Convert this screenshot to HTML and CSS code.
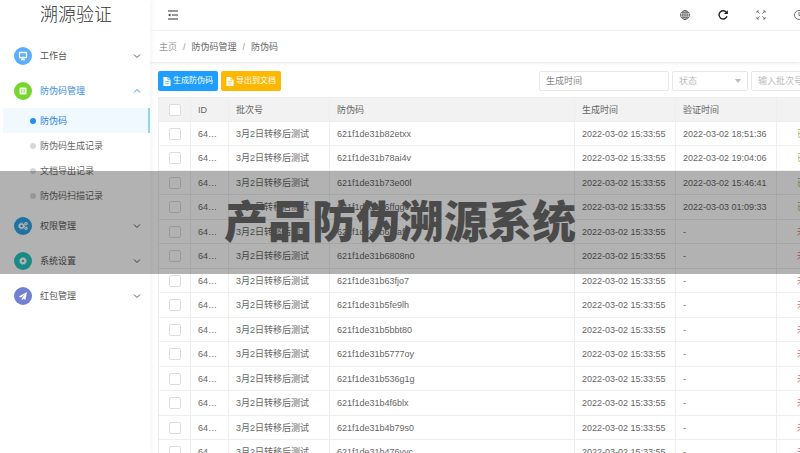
FILE: index.html
```html
<!DOCTYPE html>
<html lang="zh-CN">
<head>
<meta charset="utf-8">
<meta name="viewport" content="width=device-width, initial-scale=1">
<title>产品防伪溯源系统</title>
<link rel="stylesheet" href="styles.css">
</head>
<body>
<div class="app">
  <aside class="sidebar">
    <div class="brand">溯源验证</div>
    <nav class="menu">
      <a class="item" href="#"><span class="badge blue"><svg viewBox="0 0 18 18"><path d="M5.5 5.5h7v5h-7z" fill="none" stroke="#fff" stroke-width="1.3" stroke-linejoin="round"/><path d="M7 12.5h4M9 10.500v2" stroke="#fff" stroke-width="1.300"/></svg></span><span class="label">工作台</span><svg class="chevron" viewBox="0 0 8 8"><path d="M1 2.500l3 3 3-3"/></svg></a>
      <a class="item open" href="#"><span class="badge green"><svg viewBox="0 0 18 18"><rect x="5.500" y="5.500" width="7" height="7" rx="1" fill="#fff" fill-opacity=".9"/><path d="M7 8h1.500M9.500 8H11M7 10h1.500M9.500 10H11" stroke="#7ed321"/></svg></span><span class="label">防伪码管理</span><svg class="chevron" viewBox="0 0 8 8"><path d="M1 5.500l3-3 3 3"/></svg></a>
      <a class="sub active" href="#">防伪码</a>
      <a class="sub" href="#">防伪码生成记录</a>
      <a class="sub" href="#">文档导出记录</a>
      <a class="sub" href="#">防伪码扫描记录</a>
      <a class="item" href="#"><span class="badge azure"><svg viewBox="0 0 18 18" fill="none" stroke="#fff"><circle cx="7.500" cy="9" r="2" stroke-width="1.600"/><circle cx="7.500" cy="9" r="3" stroke-dasharray="1.200 1.160"/><circle cx="12" cy="6.800" r="1.200" stroke-width="1.200"/><circle cx="12" cy="11.200" r="1.200" stroke-width="1.200"/></svg></span><span class="label">权限管理</span><svg class="chevron" viewBox="0 0 8 8"><path d="M1 2.500l3 3 3-3"/></svg></a>
      <a class="item" href="#"><span class="badge teal"><svg viewBox="0 0 18 18" fill="none" stroke="#fff"><circle cx="9" cy="9" r="2.200" stroke-width="2"/><circle cx="9" cy="9" r="3.300" stroke-dasharray="1.400 1.190"/></svg></span><span class="label">系统设置</span><svg class="chevron" viewBox="0 0 8 8"><path d="M1 2.500l3 3 3-3"/></svg></a>
      <a class="item" href="#"><span class="badge violet"><svg viewBox="0 0 18 18"><path d="M13 5L4.800 9.500l2.200 1.100 4-3.600-3.200 4.200v2.300l1.400-1.700 2.300 1z" fill="#fff"/></svg></span><span class="label">红包管理</span><svg class="chevron" viewBox="0 0 8 8"><path d="M1 2.500l3 3 3-3"/></svg></a>
    </nav>
  </aside>
  <main class="main">
    <header class="topbar">
      <button class="tool" type="button" aria-label="收起菜单"><svg viewBox="0 0 12 12" stroke="#333" stroke-width="1.200"><path d="M1 2h10M5 6h6M1 10h10"/><path d="M1 6l2.500-1.600v3.200z" fill="#333" stroke="none"/></svg></button>
      <div class="tools">
        <button class="tool" type="button" aria-label="语言"><svg viewBox="0 0 12 12" fill="none" stroke="#555" stroke-width=".8"><circle cx="6" cy="6" r="4.500"/><ellipse cx="6" cy="6" rx="2.200" ry="4.500"/><path d="M6 1.500v9M1.500 6h9M2.300 3.700h7.400M2.300 8.300h7.400"/></svg></button>
        <button class="tool" type="button" aria-label="刷新"><svg viewBox="0 0 12 12" fill="none" stroke="#222" stroke-width="1.400"><path d="M9.600 3.600A4.100 4.100 0 1 0 10 7.300"/><path d="M10.900 1.200v3.900H7z" fill="#222" stroke="none"/></svg></button>
        <button class="tool" type="button" aria-label="全屏"><svg viewBox="0 0 12 12" fill="none" stroke="#777" stroke-width=".9"><path d="M2 4V2h2M8 2h2v2M10 8v2H8M4 10H2V8M2 2l2.700 2.700M10 2L7.300 4.700M10 10L7.300 7.300M2 10l2.700-2.700"/></svg></button>
        <button class="tool" type="button" aria-label="时间"><svg viewBox="0 0 12 12" fill="none" stroke="#666" stroke-width=".9"><circle cx="6" cy="6" r="4.500"/><path d="M6 3v3.500h2.500"/></svg></button>
      </div>
    </header>
    <nav class="crumbs" aria-label="位置">
      <a class="home" href="#">主页</a><span>/</span><a href="#">防伪码管理</a><span>/</span><a href="#">防伪码</a>
    </nav>
    <section class="content">
      <div class="toolbar">
        <button class="btn primary" type="button"><svg viewBox="0 0 8 10"><path d="M0 0h5l3 3v7H0z" fill="#fff"/><path d="M5 0v3h3M2 5h4M2 7.500h4" fill="none" stroke="#1e9fff" stroke-width=".8"/></svg>生成防伪码</button>
        <button class="btn warm" type="button"><svg viewBox="0 0 8 10"><path d="M0 0h5l3 3v7H0z" fill="#fff"/><path d="M5 0v3h3M2 5h4M2 7.500h4" fill="none" stroke="#ffb800" stroke-width=".8"/></svg>导出到文档</button>
        <div class="filters">
          <input class="field date" type="text" placeholder="生成时间" aria-label="生成时间">
          <span class="picker"><select class="field" aria-label="状态"><option>状态</option></select></span>
          <input class="field batch" type="text" placeholder="输入批次号" aria-label="输入批次号">
        </div>
      </div>
      <table class="grid">
        <colgroup><col class="c-check"><col class="c-id"><col class="c-batch"><col><col class="c-time"><col class="c-time"><col class="c-state"></colgroup>
        <thead>
          <tr><th class="check"><input type="checkbox" aria-label="全选"></th><th>ID</th><th>批次号</th><th>防伪码</th><th>生成时间</th><th>验证时间</th><th class="state">状态</th></tr>
        </thead>
        <tbody>
          <tr><td class="check"><input type="checkbox" aria-label="选择"></td><td>64…</td><td>3月2日转移后测试</td><td>621f1de31b82etxx</td><td>2022-03-02 15:33:55</td><td>2022-03-02 18:51:36</td><td class="state yes">已验证</td></tr>
          <tr><td class="check"><input type="checkbox" aria-label="选择"></td><td>64…</td><td>3月2日转移后测试</td><td>621f1de31b78ai4v</td><td>2022-03-02 15:33:55</td><td>2022-03-02 19:04:06</td><td class="state yes">已验证</td></tr>
          <tr><td class="check"><input type="checkbox" aria-label="选择"></td><td>64…</td><td>3月2日转移后测试</td><td>621f1de31b73e00l</td><td>2022-03-02 15:33:55</td><td>2022-03-02 15:46:41</td><td class="state yes">已验证</td></tr>
          <tr><td class="check"><input type="checkbox" aria-label="选择"></td><td>64…</td><td>3月2日转移后测试</td><td>621f1de31b6ffqgc</td><td>2022-03-02 15:33:55</td><td>2022-03-03 01:09:33</td><td class="state yes">已验证</td></tr>
          <tr><td class="check"><input type="checkbox" aria-label="选择"></td><td>64…</td><td>3月2日转移后测试</td><td>621f1de31b6bfafl</td><td>2022-03-02 15:33:55</td><td>-</td><td class="state no">未验证</td></tr>
          <tr><td class="check"><input type="checkbox" aria-label="选择"></td><td>64…</td><td>3月2日转移后测试</td><td>621f1de31b6808n0</td><td>2022-03-02 15:33:55</td><td>-</td><td class="state no">未验证</td></tr>
          <tr><td class="check"><input type="checkbox" aria-label="选择"></td><td>64…</td><td>3月2日转移后测试</td><td>621f1de31b63fjo7</td><td>2022-03-02 15:33:55</td><td>-</td><td class="state no">未验证</td></tr>
          <tr><td class="check"><input type="checkbox" aria-label="选择"></td><td>64…</td><td>3月2日转移后测试</td><td>621f1de31b5fe9lh</td><td>2022-03-02 15:33:55</td><td>-</td><td class="state no">未验证</td></tr>
          <tr><td class="check"><input type="checkbox" aria-label="选择"></td><td>64…</td><td>3月2日转移后测试</td><td>621f1de31b5bbt80</td><td>2022-03-02 15:33:55</td><td>-</td><td class="state no">未验证</td></tr>
          <tr><td class="check"><input type="checkbox" aria-label="选择"></td><td>64…</td><td>3月2日转移后测试</td><td>621f1de31b5777oy</td><td>2022-03-02 15:33:55</td><td>-</td><td class="state no">未验证</td></tr>
          <tr><td class="check"><input type="checkbox" aria-label="选择"></td><td>64…</td><td>3月2日转移后测试</td><td>621f1de31b536g1g</td><td>2022-03-02 15:33:55</td><td>-</td><td class="state no">未验证</td></tr>
          <tr><td class="check"><input type="checkbox" aria-label="选择"></td><td>64…</td><td>3月2日转移后测试</td><td>621f1de31b4f6blx</td><td>2022-03-02 15:33:55</td><td>-</td><td class="state no">未验证</td></tr>
          <tr><td class="check"><input type="checkbox" aria-label="选择"></td><td>64…</td><td>3月2日转移后测试</td><td>621f1de31b4b79s0</td><td>2022-03-02 15:33:55</td><td>-</td><td class="state no">未验证</td></tr>
          <tr><td class="check"><input type="checkbox" aria-label="选择"></td><td>64…</td><td>3月2日转移后测试</td><td>621f1de31b476vvc</td><td>2022-03-02 15:33:55</td><td>-</td><td class="state no">未验证</td></tr>
        </tbody>
      </table>
    </section>
  </main>
  <h1 class="banner">产品防伪溯源系统</h1>
</div>
</body>
</html>
```

FILE: styles.css
```css
* { box-sizing: border-box; }

body {
  margin: 0;
  background: #fff;
  color: #666;
  font: 9px/16px "Liberation Sans", "Noto Sans CJK SC", sans-serif;
}

a { color: inherit; text-decoration: none; }

button, input, select { font: inherit; margin: 0; }

.app {
  position: relative;
  display: flex;
  height: 100vh;
  overflow: hidden;
}

/* Sidebar */
.sidebar {
  flex: none;
  width: 150px;
  box-shadow: 0 0 6px rgba(0, 0, 0, .08);
}

.brand {
  height: 38px;
  padding-left: 40px;
  color: #333;
  font-size: 18px;
  font-weight: 300;
  line-height: 30px;
}

.item {
  display: flex;
  align-items: center;
  gap: 8px;
  height: 35px;
  padding: 0 9px 0 14px;
  color: #555;
}

.item.open { color: #3a8ee6; }

.label { flex: 1; }

.badge {
  width: 18px;
  height: 18px;
  border-radius: 50%;
}

.badge svg { display: block; }

.blue { background: #5aaefa; }
.green { background: #76d62f; }
.azure { background: #2ea5e6; }
.teal { background: #25c7c0; }
.violet { background: #7280d2; }

.chevron {
  width: 8px;
  height: 8px;
  fill: none;
  stroke: currentColor;
}

.sub {
  display: flex;
  align-items: center;
  gap: 4px;
  height: 25px;
  margin-left: 3px;
  padding-left: 27px;
}

.sub::before {
  content: "";
  width: 6px;
  height: 6px;
  border-radius: 50%;
  background: #d8d8d8;
}

.sub.active {
  border-right: 2px solid #93d8e2;
  background: #f0f9ff;
  color: #2d82e0;
}

.sub.active::before { background: #2d8cf0; }

/* Header */
.main {
  flex: 1;
  min-width: 0;
  overflow: hidden;
}

.topbar {
  display: flex;
  align-items: center;
  justify-content: space-between;
  height: 31px;
  margin-right: -5px;
  padding-left: 17px;
  border-bottom: 1px solid #f4f4f4;
}

.tools { display: flex; gap: 26px; }

.tool {
  width: 12px;
  height: 12px;
  padding: 0;
  border: 0;
  background: none;
}

.tool svg { display: block; }

.crumbs {
  display: flex;
  align-items: center;
  gap: 6px;
  height: 31px;
  padding-left: 9px;
  box-shadow: 0 1px 3px rgba(0, 0, 0, .1);
}

.crumbs .home, .crumbs span { color: #999; }

/* Content runs past the right edge of the window */
.content {
  margin-right: -45px;
  padding: 9px 0 0 8px;
}

.toolbar {
  display: flex;
  gap: 3px;
  height: 20px;
  margin-bottom: 6px;
}

.btn {
  display: flex;
  align-items: center;
  justify-content: center;
  gap: 2px;
  width: 60px;
  padding: 0;
  border: 0;
  border-radius: 2px;
  color: #fff;
  font-size: 8px;
  font-weight: 400;
  white-space: nowrap;
}

.btn svg { width: 8px; height: 9px; }

.primary { background: #1e9fff; }
.warm { background: #ffb800; }

.filters {
  display: flex;
  gap: 3px;
  margin-left: auto;
}

.field {
  height: 20px;
  padding: 0 6px;
  border: 1px solid #e8e8e8;
  border-radius: 2px;
  background: #fff;
  color: #bbb;
}

.field::placeholder { color: #bbb; opacity: 1; }

.date { width: 130px; }
.date::placeholder { color: #888; }
.batch { width: 94px; }

.picker { position: relative; width: 76px; }

.picker .field {
  display: block;
  width: 100%;
  appearance: none;
}

.picker::after {
  content: "";
  position: absolute;
  top: 8px;
  right: 7px;
  border: 3px solid transparent;
  border-top: 4px solid #bbb;
  border-bottom: 0;
}

/* Table */
.grid {
  width: 100%;
  border-collapse: collapse;
  table-layout: fixed;
}

.c-check { width: 32px; }
.c-id { width: 38px; }
.c-batch, .c-time { width: 101px; }
.c-state { width: 68px; }

.grid th, .grid td {
  height: 24px;
  padding: 0 0 0 7px;
  border: 1px solid #eee;
  font-weight: 400;
  text-align: left;
  white-space: nowrap;
}

.grid th { background: #f2f2f2; }

.grid tr:nth-child(even) td { height: 25px; }

.grid .check, .grid .state {
  padding: 0;
  text-align: center;
}

.grid input {
  display: block;
  width: 12px;
  height: 12px;
  margin: 0 auto;
  border: 1px solid #ddd;
  border-radius: 2px;
  background: #fff;
  appearance: none;
}

.yes { color: #7fc35a; }
.no { color: #f0606a; }

/* Title band laid over the page */
.banner {
  position: absolute;
  top: 171px;
  left: 0;
  right: 0;
  margin: 0;
  padding-bottom: 6px;
  background: rgba(0, 0, 0, .3);
  color: #4a4a4a;
  font-family: "Noto Sans CJK SC", sans-serif;
  font-size: 44px;
  font-weight: 900;
  line-height: 97px;
  text-align: center;
}
```
